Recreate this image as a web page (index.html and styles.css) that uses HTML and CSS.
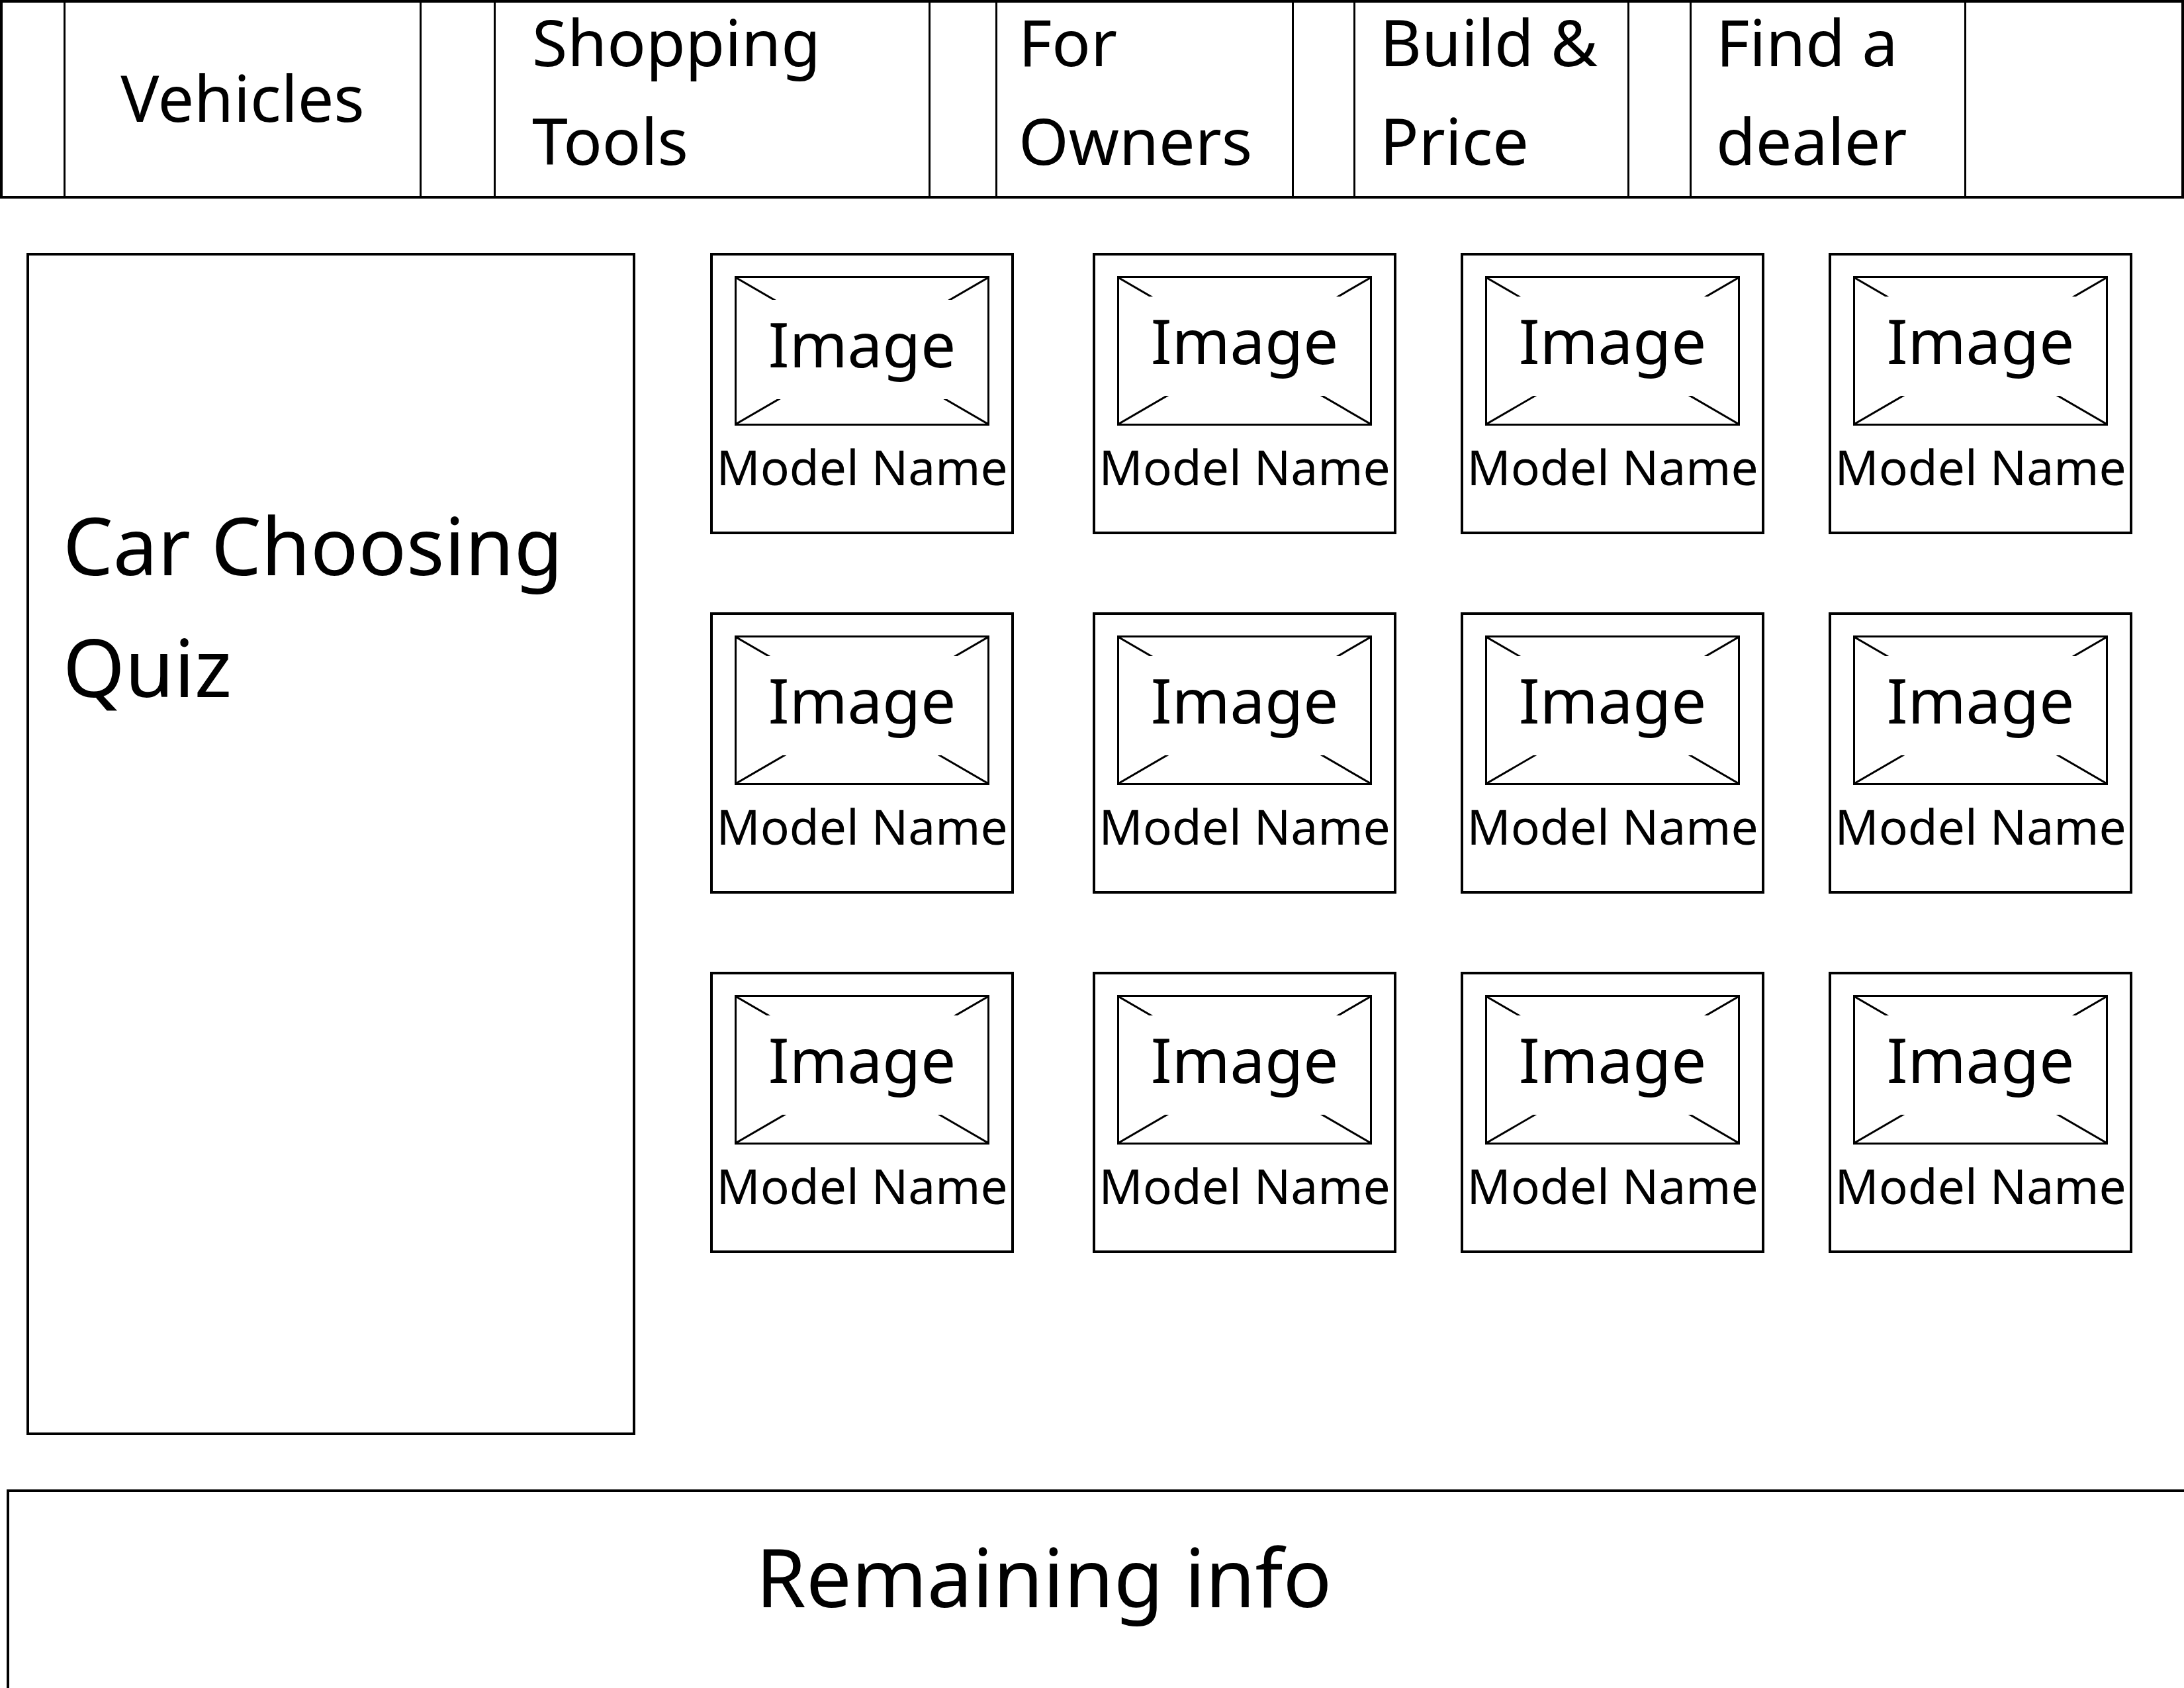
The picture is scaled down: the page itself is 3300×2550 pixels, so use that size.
FILE: index.html
```html
<!DOCTYPE html>
<html>
  <head>
    <meta name="viewport" content="width=device-width, initial-scale=1.0" />
    <link rel="stylesheet" href="styles.css">
  </head>
  <body>
    <header class="nav">
      <a class="nav-item nav-item--vehicles" href="#vehicles">Vehicles</a>
      <a class="nav-item nav-item--shopping nav-item--wrap" href="#shopping">Shopping Tools</a>
      <a class="nav-item nav-item--owners nav-item--wrap" href="#owners">For Owners</a>
      <a class="nav-item nav-item--build nav-item--wrap" href="#build">Build &amp; Price</a>
      <a class="nav-item nav-item--dealer nav-item--wrap" href="#dealer">Find a dealer</a>
    </header>

    <main class="main">
      <section class="quiz">
        <h2 class="quiz-title">Car Choosing Quiz</h2>
      </section>

      <section class="models">
        <div class="model-card">
          <div class="thumb">
            <svg class="thumb-x" viewBox="0 0 100 100" preserveAspectRatio="none"><path d="M0 0L100 100M100 0L0 100" /></svg>
            <span class="thumb-label thumb-label--low">Image</span>
          </div>
          <div class="model-name">Model Name</div>
        </div>
        <div class="model-card">
          <div class="thumb">
            <svg class="thumb-x" viewBox="0 0 100 100" preserveAspectRatio="none"><path d="M0 0L100 100M100 0L0 100" /></svg>
            <span class="thumb-label">Image</span>
          </div>
          <div class="model-name">Model Name</div>
        </div>
        <div class="model-card">
          <div class="thumb">
            <svg class="thumb-x" viewBox="0 0 100 100" preserveAspectRatio="none"><path d="M0 0L100 100M100 0L0 100" /></svg>
            <span class="thumb-label">Image</span>
          </div>
          <div class="model-name">Model Name</div>
        </div>
        <div class="model-card">
          <div class="thumb">
            <svg class="thumb-x" viewBox="0 0 100 100" preserveAspectRatio="none"><path d="M0 0L100 100M100 0L0 100" /></svg>
            <span class="thumb-label">Image</span>
          </div>
          <div class="model-name">Model Name</div>
        </div>

        <div class="model-card">
          <div class="thumb">
            <svg class="thumb-x" viewBox="0 0 100 100" preserveAspectRatio="none"><path d="M0 0L100 100M100 0L0 100" /></svg>
            <span class="thumb-label">Image</span>
          </div>
          <div class="model-name">Model Name</div>
        </div>
        <div class="model-card">
          <div class="thumb">
            <svg class="thumb-x" viewBox="0 0 100 100" preserveAspectRatio="none"><path d="M0 0L100 100M100 0L0 100" /></svg>
            <span class="thumb-label">Image</span>
          </div>
          <div class="model-name">Model Name</div>
        </div>
        <div class="model-card">
          <div class="thumb">
            <svg class="thumb-x" viewBox="0 0 100 100" preserveAspectRatio="none"><path d="M0 0L100 100M100 0L0 100" /></svg>
            <span class="thumb-label">Image</span>
          </div>
          <div class="model-name">Model Name</div>
        </div>
        <div class="model-card">
          <div class="thumb">
            <svg class="thumb-x" viewBox="0 0 100 100" preserveAspectRatio="none"><path d="M0 0L100 100M100 0L0 100" /></svg>
            <span class="thumb-label">Image</span>
          </div>
          <div class="model-name">Model Name</div>
        </div>

        <div class="model-card">
          <div class="thumb">
            <svg class="thumb-x" viewBox="0 0 100 100" preserveAspectRatio="none"><path d="M0 0L100 100M100 0L0 100" /></svg>
            <span class="thumb-label">Image</span>
          </div>
          <div class="model-name">Model Name</div>
        </div>
        <div class="model-card">
          <div class="thumb">
            <svg class="thumb-x" viewBox="0 0 100 100" preserveAspectRatio="none"><path d="M0 0L100 100M100 0L0 100" /></svg>
            <span class="thumb-label">Image</span>
          </div>
          <div class="model-name">Model Name</div>
        </div>
        <div class="model-card">
          <div class="thumb">
            <svg class="thumb-x" viewBox="0 0 100 100" preserveAspectRatio="none"><path d="M0 0L100 100M100 0L0 100" /></svg>
            <span class="thumb-label">Image</span>
          </div>
          <div class="model-name">Model Name</div>
        </div>
        <div class="model-card">
          <div class="thumb">
            <svg class="thumb-x" viewBox="0 0 100 100" preserveAspectRatio="none"><path d="M0 0L100 100M100 0L0 100" /></svg>
            <span class="thumb-label">Image</span>
          </div>
          <div class="model-name">Model Name</div>
        </div>
      </section>
    </main>

    <footer class="info">Remaining info</footer>
  </body>
</html>
```

FILE: styles.css
```css
:root {
  --ink: #000;
  --paper: #fff;
  --line: 4px;
}

* {
  box-sizing: border-box;
  margin: 0;
  padding: 0;
}

body {
  background: var(--paper);
  color: var(--ink);
  font-family: "Noto Sans", "Open Sans", sans-serif;
  overflow: hidden;
}

/* Top navigation */
.nav {
  display: flex;
  align-items: stretch;
  height: 300px;
  border: var(--line) solid var(--ink);
}

.nav-item {
  flex: none;
  display: flex;
  align-items: center;
  padding-bottom: 8px;
  border-left: 3px solid var(--ink);
  border-right: 3px solid var(--ink);
  color: var(--ink);
  text-decoration: none;
  font-size: 97px;
  line-height: 149px;
}

.nav-item--wrap {
  padding-bottom: 26px;
}

.nav-item--vehicles {
  width: 541px;
  margin-left: 92px;
  justify-content: center;
  text-align: center;
}

.nav-item--shopping {
  width: 660px;
  margin-left: 109px;
  padding-left: 55px;
}

.nav-item--owners {
  width: 451px;
  margin-left: 98px;
  padding-left: 32px;
}

.nav-item--build {
  width: 417px;
  margin-left: 90px;
  padding-left: 37px;
}

.nav-item--dealer {
  width: 418px;
  margin-left: 91px;
  padding-left: 37px;
}

/* Main area */
.main {
  display: flex;
  align-items: flex-start;
  gap: 113px;
  padding: 82px 0 0 40px;
}

.quiz {
  flex: none;
  width: 920px;
  height: 1786px;
  border: var(--line) solid var(--ink);
  padding: 345px 0 0 51px;
}

.quiz-title {
  font-size: 120px;
  font-weight: 400;
  line-height: 184px;
}

/* Model grid */
.models {
  display: grid;
  grid-template-columns: 481px repeat(3, 459px);
  column-gap: 97px;
  row-gap: 118px;
}

.model-card {
  width: 459px;
  height: 425px;
  border: var(--line) solid var(--ink);
}

.thumb {
  display: grid;
  width: 385px;
  height: 226px;
  margin: 31px auto 0;
  border: 3px solid var(--ink);
}

.thumb-x {
  grid-area: 1 / 1;
  width: 100%;
  height: 100%;
}

.thumb-x path {
  fill: none;
  stroke: var(--ink);
  stroke-width: 3;
  vector-effect: non-scaling-stroke;
}

.thumb-label {
  grid-area: 1 / 1;
  align-self: start;
  height: 150px;
  margin-top: 28px;
  padding-bottom: 18px;
  background: var(--paper);
  font-size: 94px;
  line-height: 132px;
  text-align: center;
}

.thumb-label--low {
  margin-top: 33px;
  padding-bottom: 8px;
}

.model-name {
  margin-top: 12px;
  font-size: 73px;
  line-height: 100px;
  text-align: center;
  white-space: nowrap;
}

/* Footer block */
.info {
  height: 420px;
  margin: 82px 0 0 10px;
  border: var(--line) solid var(--ink);
  border-right: none;
  padding: 46px 0 0 1128px;
  font-size: 122px;
  line-height: 163px;
}
```
